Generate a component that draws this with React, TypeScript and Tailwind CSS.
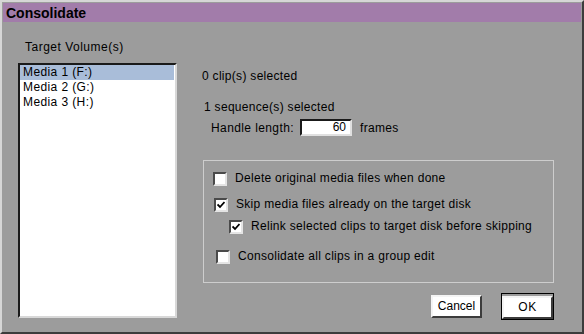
const font = { fontFamily: '"Liberation Sans", Arial, sans-serif' };

function CheckBox({ checked }: { checked?: boolean }) {
  return (
    <div className="w-[14px] h-[14px] shrink-0 bg-white border-2 border-t-[#4a4a4a] border-l-[#4a4a4a] border-r-[#e4e4e4] border-b-[#e4e4e4] flex items-center justify-center">
      {checked && (
        <svg width="8" height="8" viewBox="0 0 8 8">
          <path d="M0.5 3.5 L3 6 L7.5 1" fill="none" stroke="#000" strokeWidth="1.8" />
        </svg>
      )}
    </div>
  );
}

function Option({ label, checked, indent, top }: { label: string; checked?: boolean; indent: string; top: string }) {
  return (
    <div className={`flex items-center h-[15px] gap-[8px] ${indent} ${top}`}>
      <CheckBox checked={checked} />
      <span className="text-[12px] leading-[15px] tracking-[0.3px] text-black whitespace-nowrap">{label}</span>
    </div>
  );
}

export default function App() {
  const volumes = ["Media 1 (F:)", "Media 2 (G:)", "Media 3 (H:)"];
  return (
    <div
      style={font}
      className="w-[584px] h-[334px] bg-[#9c9c9c] border-2 border-t-[#d6d6d6] border-l-[#d6d6d6] border-r-[#3c3c3c] border-b-[#3c3c3c] p-[1px] flex flex-col overflow-hidden"
    >
      <div className="h-[19px] bg-[#a27caa] flex items-center px-[3px]">
        <span className="text-[14px] font-bold text-black leading-none">Consolidate</span>
      </div>

      <div className="flex">
        {/* target volumes */}
        <div className="ml-[15px] pt-[18px] flex flex-col">
          <span className="ml-[7px] text-[12px] leading-[14px] tracking-[0.5px] text-black">Target Volume(s)</span>
          <div className="mt-[9px] w-[159px] h-[255px] bg-white border-2 border-t-[#1a1a1a] border-l-[#1a1a1a] border-r-[#d8d8d8] border-b-[#d8d8d8]">
            {volumes.map((v, i) => (
              <div
                key={v}
                className={`h-[15px] mr-[1px] pl-[3px] text-[12px] leading-[15px] tracking-[0.4px] text-black ${i === 0 ? "bg-[#a9bdd9]" : ""}`}
              >
                {v}
              </div>
            ))}
          </div>
        </div>

        {/* options */}
        <div className="ml-[25px] pt-[47px] flex flex-col">
          <span className="text-[12px] leading-[14px] tracking-[0.3px] text-black">0 clip(s) selected</span>
          <span className="mt-[17px] ml-[2px] text-[12px] leading-[14px] tracking-[0.3px] text-black">1 sequence(s) selected</span>
          <div className="mt-[5px] flex items-center">
            <span className="ml-[9px] text-[12px] leading-[14px] tracking-[0.4px] text-black">Handle length:</span>
            <div className="ml-[6px] w-[52px] h-[17px] bg-white border-2 border-t-[#1a1a1a] border-l-[#1a1a1a] border-r-[#e0e0e0] border-b-[#e0e0e0] text-right pr-[4px] text-[12px] leading-[13px] text-black">
              60
            </div>
            <span className="ml-[8px] text-[12px] leading-[14px] tracking-[0.3px] text-black">frames</span>
          </div>

          <div className="mt-[24px] ml-[1px] w-[351px] h-[123px] border border-[#cdcdcd] flex flex-col">
            <Option label="Delete original media files when done" indent="ml-[9px]" top="mt-[10px]" />
            <Option label="Skip media files already on the target disk" checked indent="ml-[10px]" top="mt-[11px]" />
            <Option label="Relink selected clips to target disk before skipping" checked indent="ml-[25px]" top="mt-[7px]" />
            <Option label="Consolidate all clips in a group edit" indent="ml-[12px]" top="mt-[15px]" />
          </div>

          <div className="mt-[10px] ml-[1px] w-[351px] flex items-center justify-end gap-[19px]">
            <button className="w-[51px] h-[23px] bg-white border-2 border-t-[#f4f4f4] border-l-[#f4f4f4] border-r-[#3c3c3c] border-b-[#3c3c3c] text-[12px] text-black">
              Cancel
            </button>
            <div className="border border-black">
              <button className="w-[51px] h-[23px] bg-white border-2 border-t-[#f4f4f4] border-l-[#f4f4f4] border-r-[#3c3c3c] border-b-[#3c3c3c] text-[12px] text-black tracking-[0.5px]">
                OK
              </button>
            </div>
          </div>
        </div>
      </div>
    </div>
  );
}
